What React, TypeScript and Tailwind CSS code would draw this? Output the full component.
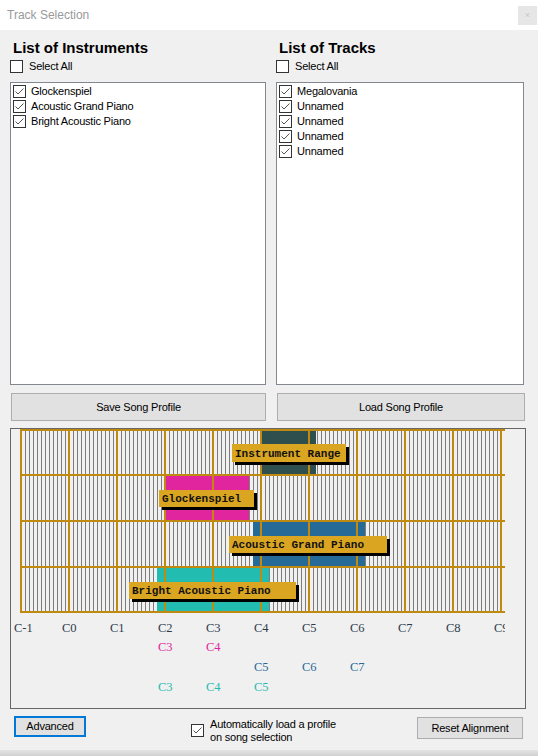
import React from "react";

const UI_FONT = "font-['Liberation_Sans',Arial,sans-serif]";

const instruments = ["Glockenspiel", "Acoustic Grand Piano", "Bright Acoustic Piano"];
const tracks = ["Megalovania", "Unnamed", "Unnamed", "Unnamed", "Unnamed"];

const GRID_LEFT = 20;
const OCTAVE = 48;
const rowLines = [429, 474, 520, 566, 611];

interface Bar {
  name: string;
  color: string;
  x1: number;
  x2: number;
  row: number;
  label: { x: number; y: number; w: number; h: number };
}

const bars: Bar[] = [
  { name: "Instrument Range", color: "#2f4f4f", x1: 261, x2: 316, row: 0, label: { x: 232, y: 444, w: 114, h: 18 } },
  { name: "Glockenspiel", color: "#e0259f", x1: 165, x2: 249, row: 1, label: { x: 159, y: 490, w: 95, h: 17 } },
  { name: "Acoustic Grand Piano", color: "#266a97", x1: 253, x2: 365, row: 2, label: { x: 229, y: 536, w: 158, h: 17 } },
  { name: "Bright Acoustic Piano", color: "#22bcb1", x1: 157, x2: 269, row: 3, label: { x: 129, y: 582, w: 167, h: 17 } },
];

const rangeLabels = [
  { color: "#e0259f", y: 651, notes: [["C3", 164], ["C4", 212]] },
  { color: "#266a97", y: 671, notes: [["C5", 260], ["C6", 308], ["C7", 356]] },
  { color: "#22bcb1", y: 691, notes: [["C3", 164], ["C4", 212], ["C5", 260]] },
] as const;

const Check = ({ checked }: { checked: boolean }) => (
  <span className="relative inline-block h-[13px] w-[13px] shrink-0 border border-[#333333] bg-white">
    {checked && (
      <svg className="absolute left-0 top-0" width="11" height="11" viewBox="0 0 11 11">
        <path d="M1.5 5.5 L4 8 L9.5 2.5" fill="none" stroke="#555555" strokeWidth="1" />
      </svg>
    )}
  </span>
);

const ListPanel = ({ title, items }: { title: string; items: string[] }) => (
  <div className="flex flex-col">
    <div className="ml-[3px] h-[18px] text-[15px] font-bold leading-[18px] text-black">{title}</div>
    <div className="mt-[3px] flex h-[13px] items-center gap-[6px]">
      <Check checked={false} />
      <span className="text-[11px] leading-[13px] tracking-[-0.2px] text-black">Select All</span>
    </div>
    <div className="mt-[9px] h-[303px] border border-[#828790] bg-white pl-[2px] pt-px">
      {items.map((item, i) => (
        <div key={i} className="flex h-[15px] items-center gap-[5px]">
          <Check checked />
          <span className="text-[11px] leading-[15px] tracking-[-0.2px] text-black">{item}</span>
        </div>
      ))}
    </div>
  </div>
);

const RangeChart = () => {
  const grays: number[] = [];
  for (let o = 0; o < 10; o++) {
    for (let s = 1; s < 12; s++) grays.push(GRID_LEFT + o * OCTAVE + s * 4 + 1);
  }
  const oranges = Array.from({ length: 11 }, (_, i) => GRID_LEFT + i * OCTAVE);
  const octaveNames = ["C-1", "C0", "C1", "C2", "C3", "C4", "C5", "C6", "C7", "C8", "C9"];

  return (
    <svg width="514" height="279" viewBox="11 429 514 279" className="block">
      <defs>
        <clipPath id="axisClip">
          <rect x="0" y="600" width="505" height="60" />
        </clipPath>
      </defs>
      {grays.map((x) => (
        <rect key={x} x={x} y={429} width={1} height={183} fill="#7d7d7d" />
      ))}
      {bars.map((b) => (
        <rect
          key={b.name}
          x={b.x1}
          y={rowLines[b.row] + 1}
          width={b.x2 - b.x1}
          height={rowLines[b.row + 1] - rowLines[b.row]}
          fill={b.color}
        />
      ))}
      {oranges.map((x) => (
        <rect key={x} x={x} y={429} width={2} height={184} fill="#bf8a0f" />
      ))}
      {rowLines.map((y) => (
        <rect key={y} x={GRID_LEFT} y={y} width={485} height={2} fill="#bf8a0f" />
      ))}
      {bars.map((b) => (
        <g key={b.name + "-label"}>
          <rect x={b.label.x + 3} y={b.label.y + 3} width={b.label.w} height={b.label.h} fill="#000000" />
          <rect x={b.label.x} y={b.label.y} width={b.label.w} height={b.label.h} fill="#daa520" />
          <text
            x={b.label.x + 3}
            y={b.label.y + b.label.h - 5}
            fontFamily="'Liberation Mono', 'Courier New', monospace"
            fontWeight="bold"
            fontSize="11"
            fill="#111111"
          >
            {b.name}
          </text>
        </g>
      ))}
      <g clipPath="url(#axisClip)" fontFamily="'Liberation Serif', 'Times New Roman', serif" fontSize="12.5">
        {octaveNames.map((n, i) => (
          <text key={n} x={GRID_LEFT + i * OCTAVE - 6} y={632} fill="#2d3b4c">
            {n}
          </text>
        ))}
      </g>
      <g fontFamily="'Liberation Serif', 'Times New Roman', serif" fontSize="12.5">
        {rangeLabels.map((r) =>
          r.notes.map(([n, x]) => (
            <text key={r.color + n} x={x - 6} y={r.y} fill={r.color}>
              {n}
            </text>
          ))
        )}
      </g>
    </svg>
  );
};

export default function App() {
  return (
    <div className={`${UI_FONT} relative h-[756px] w-[538px] overflow-hidden bg-[#f0f0f0]`}>
      {/* title bar */}
      <div className="flex h-[30px] items-center justify-between bg-white pl-[7px] pr-px">
        <span className="text-[12px] text-[#9a9a9a]">Track Selection</span>
        <div className="flex h-[19px] w-[19px] items-center justify-center bg-[#e6e6e6] text-[9px] leading-none text-[#c8c8c8]">
          ×
        </div>
      </div>

      <div className="grid grid-cols-[256px_248px] gap-x-[10px] px-[10px] pt-[9px]">
        <ListPanel title="List of Instruments" items={instruments} />
        <ListPanel title="List of Tracks" items={tracks} />
        <button className="ml-px mt-[8px] h-[28px] w-[255px] border border-[#adadad] bg-[#e1e1e1] text-[11px] tracking-[-0.2px] text-black">
          Save Song Profile
        </button>
        <button className="ml-px mt-[8px] h-[28px] w-[248px] border border-[#adadad] bg-[#e1e1e1] text-[11px] tracking-[-0.2px] text-black">
          Load Song Profile
        </button>
      </div>

      <div className="ml-[10px] mt-[7px] h-[281px] w-[516px] border border-[#666666]">
        <RangeChart />
      </div>

      <div className="relative mt-[6px] flex h-[30px] items-start px-[14px]">
        <button className="mt-px h-[21px] w-[72px] border-2 border-[#0078d7] bg-[#e1e1e1] text-[11px] tracking-[-0.2px] text-black">
          Advanced
        </button>
        <div className="ml-[105px] flex items-start gap-[6px] pt-[3px]">
          <div className="mt-[2px]">
            <Check checked />
          </div>
          <div className="text-[11px] leading-[12.5px] tracking-[-0.2px] text-black">
            Automatically load a profile
            <br />
            on song selection
          </div>
        </div>
        <button className="ml-auto mr-[1px] mt-[2px] h-[22px] w-[106px] border border-[#adadad] bg-[#e1e1e1] text-[11px] tracking-[-0.2px] text-black">
          Reset Alignment
        </button>
      </div>

      <div className="absolute bottom-0 left-0 h-[6px] w-full bg-gradient-to-b from-[#e4e4e4] to-[#d0d0d0]" />
    </div>
  );
}
